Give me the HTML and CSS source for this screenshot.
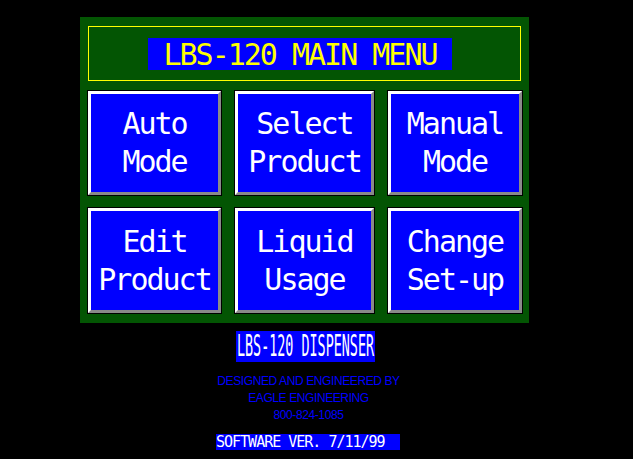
FILE: index.html
```html
<!DOCTYPE html>
<html lang="en">
<head>
    <meta charset="UTF-8">
    <title>LBS-120 Main Menu</title>
    <link rel="stylesheet" href="styles.css">
</head>
<body>

    <div class="screen">
        <!-- Main menu panel -->
        <div class="panel">
            <div class="title-frame">
                <div class="title">LBS-120 MAIN MENU</div>
            </div>

            <div class="menu-grid">
                <button class="menu-btn">Auto<br>Mode</button>
                <button class="menu-btn">Select<br>Product</button>
                <button class="menu-btn">Manual<br>Mode</button>
                <button class="menu-btn">Edit<br>Product</button>
                <button class="menu-btn">Liquid<br>Usage</button>
                <button class="menu-btn">Change<br>Set-up</button>
            </div>
        </div>

        <!-- Footer -->
        <div class="footer">
            <div class="model-box"><span class="model-text">LBS-120 DISPENSER</span></div>
            <div class="credits">
                <p>DESIGNED AND ENGINEERED BY</p>
                <p>EAGLE ENGINEERING</p>
                <p>800-824-1085</p>
            </div>
            <div class="version">SOFTWARE VER. 7/11/99</div>
        </div>
    </div>

</body>
</html>
```

FILE: styles.css
```css
/* General */
body {
    margin: 0;
    background: #000;
    font-family: "DejaVu Sans Mono", monospace;
}

.screen {
    width: 449px;
    margin-left: 80px;
    padding-top: 17px;
}

/* Panel */
.panel {
    background: #035503;
    padding: 9px 8px 10px 8px;
}

.title-frame {
    border: 1px solid #ffff00;
    height: 53px;
    width: 431px;
    display: flex;
    align-items: center;
}

.title {
    background: #0000ff;
    color: #ffff00;
    width: 304px;
    height: 32px;
    margin-left: 59px;
    line-height: 33px;
    text-align: center;
    font-size: 30px;
    letter-spacing: -2px;
}

/* Menu buttons */
.menu-grid {
    display: grid;
    grid-template-columns: 133px 139px 134px;
    grid-template-rows: 104px 105px;
    column-gap: 14px;
    row-gap: 13px;
    margin-top: 10px;
}

.menu-btn {
    background: #0000ff;
    color: #fff;
    font-family: "DejaVu Sans Mono", monospace;
    font-size: 30px;
    letter-spacing: -2px;
    line-height: 38px;
    padding: 0;
    margin: 0;
    border-style: solid;
    border-width: 3px;
    border-color: #fff #8a8a8a #8a8a8a #fff;
    box-shadow: 0 0 0 1px #000;
    cursor: pointer;
}

/* Footer */
.footer {
    display: flex;
    flex-direction: column;
    align-items: center;
    padding-top: 8px;
}

.model-box {
    background: #0000ff;
    width: 139px;
    height: 31px;
    margin-left: 2px;
    text-align: center;
}

.model-text {
    display: inline-block;
    color: #fff;
    font-size: 13.4px;
    line-height: 14px;
    margin-top: 9px;
    white-space: nowrap;
    transform: scaleY(2.3);
}

.credits {
    margin-top: 11px;
    color: #0000ff;
    font-family: "Liberation Sans", Arial, sans-serif;
    font-size: 12px;
    letter-spacing: -0.4px;
    text-align: center;
    margin-left: 8px;
}

.credits p {
    margin: 0;
    line-height: 17px;
}

.version {
    margin-top: 10px;
    margin-left: 7px;
    background: #0000ff;
    color: #fff;
    width: 184px;
    height: 16px;
    font-size: 15px;
    line-height: 16px;
    letter-spacing: -1px;
    white-space: nowrap;
}
```
